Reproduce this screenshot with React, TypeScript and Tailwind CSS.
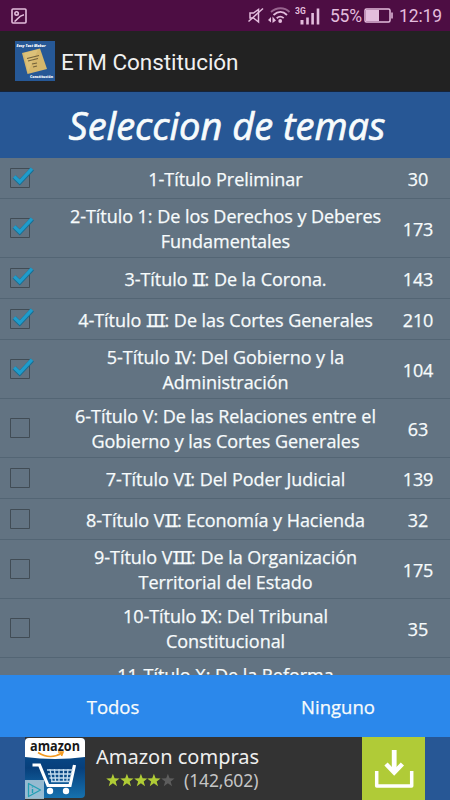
import { Fragment, useState } from "react";

type Topic = {
  lines: string[];
  count: number | null;
};

const TOPICS: Topic[] = [
  { lines: ["1-Título Preliminar"], count: 30 },
  { lines: ["2-Título 1: De los Derechos y Deberes", "Fundamentales"], count: 173 },
  { lines: ["3-Título II: De la Corona."], count: 143 },
  { lines: ["4-Título III: De las Cortes Generales"], count: 210 },
  { lines: ["5-Título IV: Del Gobierno y la", "Administración"], count: 104 },
  { lines: ["6-Título V: De las Relaciones entre el", "Gobierno y las Cortes Generales"], count: 63 },
  { lines: ["7-Título VI: Del Poder Judicial"], count: 139 },
  { lines: ["8-Título VII: Economía y Hacienda"], count: 32 },
  { lines: ["9-Título VIII: De la Organización", "Territorial del Estado"], count: 175 },
  { lines: ["10-Título IX: Del Tribunal", "Constitucional"], count: 35 },
  { lines: ["11-Título X: De la Reforma", "Constitucional"], count: null },
];

// The capital I is set with serifs so roman numerals stay readable
function TopicLine({ text }: { text: string }) {
  return (
    <span className="block whitespace-nowrap">
      {text.split(/(I+)/).map((part, i) =>
        part.startsWith("I") ? (
          <span
            key={i}
            className="font-['Inter'] text-[17.5px] leading-none tracking-[-1.5px] [font-feature-settings:'cv08']"
          >
            {part}
          </span>
        ) : (
          <Fragment key={i}>{part}</Fragment>
        )
      )}
    </span>
  );
}

function Checkbox({ checked }: { checked: boolean }) {
  return (
    <svg width="26" height="24" viewBox="0 0 26 24" fill="none" className="shrink-0">
      <path d="M.5 2.5h19v19H.5z" stroke="#414c55" />
      {checked && (
        <>
          <path d="M4.2 10.8l5.5 5.5L22.3 3" stroke="#186d92" strokeWidth="4.6" />
          <path d="M4.2 10.5l5.5 5.3L22 2.7" stroke="#1f9ccb" strokeWidth="3.3" />
        </>
      )}
    </svg>
  );
}

function StatusBar() {
  return (
    <header className="flex h-[31px] shrink-0 items-center bg-[#4d0d43] pl-[11px] pr-[8px] text-[#e3bddd]">
      <svg width="16" height="16" viewBox="0 0 16 16" fill="none" stroke="currentColor" strokeWidth="1.6">
        <rect x="1" y="1" width="14" height="14" rx="1" />
        <circle cx="5.6" cy="5.4" r="1.7" />
        <path d="M3.5 13.5c2.8-1 3.7-5.8 9.5-6.7" />
      </svg>

      {/* muted speaker */}
      <svg className="ml-auto" width="17" height="17" viewBox="0 0 17 17" fill="none" stroke="currentColor" strokeWidth="1.5">
        <path d="M3 6h3.5l5-3.5V15l-5-4H3z" />
        <path d="M1.5 14.5L16 1.5" />
      </svg>

      {/* wifi with traffic arrows */}
      <svg className="ml-[4px]" width="23" height="17" viewBox="0 0 23 17" fill="none" stroke="currentColor" strokeWidth="1.8">
        <path d="M3 5c5.5-5 13.5-5 18.5 0" stroke="#98658f" />
        <path d="M5.5 8c4.5-4 9.5-4 13.5 0M8.7 11.2c2.3-2 4.8-2 7 0" />
        <circle cx="12.2" cy="14" r="1.9" fill="currentColor" stroke="none" />
        <path d="M0 13l3-3v5.5zM4.5 9.5l3.5 4-3.5 2.5z" fill="currentColor" stroke="none" />
      </svg>

      <svg className="ml-[4px]" width="26" height="20" viewBox="0 0 26 20" fill="currentColor">
        <text x="0" y="8" fontSize="8.5" fontWeight="700" fontFamily="Roboto, sans-serif">3G</text>
        <path d="M5.5 14h3v4.500h-3zM11.2 11.5h2.6v7h-2.6zM16.3 7h2.6v11.500h-2.6zM21.7 2.500h2.6v16h-2.6z" />
      </svg>

      <span className="ml-[9px] w-[33px] whitespace-nowrap pt-[2px] font-['Roboto'] text-[17.5px] leading-none tracking-[-0.2px]">55%</span>

      <svg className="ml-px" width="29" height="15" viewBox="0 0 29 15" fill="none" stroke="currentColor" strokeWidth="1.5">
        <rect x="1" y="1" width="25" height="13" rx="1.5" />
        <path d="M2 2h13v11H2z" fill="currentColor" stroke="none" />
        <path d="M28 4.500v6" />
      </svg>

      <span className="ml-[6px] whitespace-nowrap pt-[2px] font-['Roboto'] text-[17.5px] leading-none tracking-[-0.1px]">12:19</span>
    </header>
  );
}

function AppIcon() {
  return (
    <svg width="40" height="40" viewBox="0 0 40 40">
      <rect width="40" height="40" fill="#265896" />
      <path d="M7 12L25 7.5 32 28 12.5 33z" fill="#d5b76c" />
      <path d="M9 12l14-3.500L13 31z" fill="#e3cb85" opacity=".5" />
      <path d="M12 17.5l12-3M13 20l10-2.500M17 23l5-1M18 26l4-1" stroke="#72613b" strokeWidth="1.1" />
      <g fill="#fff" fontFamily="Open Sans, sans-serif" fontSize="4" fontWeight="800">
        <text x="1.5" y="6" textLength="29" lengthAdjust="spacingAndGlyphs" fontStyle="italic">Easy Test Maker</text>
        <text x="15" y="37" textLength="23" lengthAdjust="spacingAndGlyphs">Constitución</text>
      </g>
    </svg>
  );
}

function AmazonIcon() {
  return (
    <svg width="60" height="62" viewBox="0 0 60 62">
      <defs>
        <linearGradient id="cartBg" x1="0" y1="0" x2="0" y2="1">
          <stop offset="0" stopColor="#075496" />
          <stop offset=".5" stopColor="#073f7b" />
          <stop offset="1" stopColor="#1672af" />
        </linearGradient>
      </defs>
      <rect y="1" width="60" height="60" rx="4" fill="url(#cartBg)" />
      <path d="M0 20V5a4 4 0 014-4h52a4 4 0 014 4v15Q30 24 0 20z" fill="#fff" />
      <text x="5" y="14" fontSize="15" fontWeight="700" fontFamily="Open Sans, sans-serif" fill="#181818" textLength="50" lengthAdjust="spacingAndGlyphs">amazon</text>
      <path d="M13 15.500c8 5 17 5 24 .5M33 15h5l-1.500 4" fill="none" stroke="#f39a21" strokeWidth="1.7" />
      <path d="M7.500 28h7l8.500 20.500h22l4.500-20.500" fill="none" stroke="#fff" strokeWidth="3.2" />
      <path d="M22 33h26M23 37h24M24.500 41h21M26 44.500h18M25 32l2 12M29.500 32l1 12M34 32v12M38.500 32v12M43 32l-1 12" stroke="#c4dced" strokeWidth="1.3" />
      <circle cx="25" cy="54" r="3.2" fill="#fff" />
      <circle cx="41" cy="54" r="3.2" fill="#fff" />
      <path d="M0 43h19v19H0z" fill="#adcbdb" opacity=".85" />
      <path d="M3.500 46.500v13l12-6.500z" fill="none" stroke="#229fb4" strokeWidth="1.3" strokeLinejoin="round" />
      <path d="M7.500 52v4M7.500 49.500v1" stroke="#229fb4" strokeWidth="1.4" />
    </svg>
  );
}

function Star({ on }: { on: boolean }) {
  return (
    <svg width="13.8" height="14" viewBox="0.5 0.3 13 13">
      <path
        d="M7 .8l1.600 4.400 4.700.100-3.700 2.800 1.300 4.500L7 9.900l-3.900 2.700 1.300-4.500L.7 5.300l4.700-.1z"
        fill={on ? "#b0cc36" : "#5d5d5d"}
      />
    </svg>
  );
}

function AdBanner() {
  return (
    <footer className="flex h-[63px] shrink-0 bg-[#275795] pl-[25px] pr-[25px]">
      <div className="flex w-[337px] bg-[#333333]">
        <AmazonIcon />
        <div className="pl-[11px] pt-[6px] font-['Noto_Sans'] text-[#efefef]">
          <p className="whitespace-nowrap text-[20px] leading-[27px]">Amazon compras</p>
          <div className="flex items-center pl-[10px]">
            {[1, 2, 3, 4, 5].map((n) => (
              <Star key={n} on={n <= 4} />
            ))}
            <span className="ml-[9px] whitespace-nowrap text-[17.5px] leading-[20px] tracking-[-0.1px] text-[#c5c5c5]">(142,602)</span>
          </div>
        </div>
      </div>
      <div className="flex w-[63px] items-center justify-center bg-[#b0cb37]">
        <svg width="40" height="40" viewBox="0 0 40 40" fill="none" stroke="#fff">
          <path d="M2.700 22v15h35V22" strokeWidth="3.5" strokeLinejoin="round" />
          <path d="M20.200 1v22" strokeWidth="4.8" />
          <path d="M12 15l8.200 8.500L28.400 15" strokeWidth="4.5" />
        </svg>
      </div>
    </footer>
  );
}

export default function App() {
  const [selected, setSelected] = useState<number[]>([0, 1, 2, 3, 4]);

  const toggle = (idx: number) =>
    setSelected((prev) => (prev.includes(idx) ? prev.filter((n) => n !== idx) : [...prev, idx]));

  return (
    <div className="flex h-[800px] w-[450px] flex-col overflow-hidden bg-[#627382] font-['Open_Sans',sans-serif] text-[#f7fbfc]">
      <StatusBar />

      <div className="flex h-[61px] shrink-0 items-center border-b border-[#16243a] bg-[#222222] pl-[15px]">
        <AppIcon />
        <h1 className="ml-[6px] whitespace-nowrap pt-[4px] font-['Roboto'] text-[22.5px] tracking-[-0.05px] text-[#f0f0f0]">
          ETM Constitución
        </h1>
      </div>

      <h2 className="flex h-[66px] shrink-0 items-center justify-center whitespace-nowrap bg-[#275795] pl-[4px] text-[38px] italic [-webkit-text-stroke:0.7px_currentColor]">
        Seleccion de temas
      </h2>

      <ul className="min-h-0 flex-1 overflow-hidden [-webkit-text-stroke:0.25px_currentColor]">
        {TOPICS.map((topic, i) => (
          <li
            key={i}
            onClick={() => toggle(i)}
            className={`flex items-center border-b border-[#536574] pl-[10px] text-[18px] leading-[25px] ${
              topic.lines.length > 1 ? "h-[59px]" : "h-[41px]"
            }`}
          >
            {topic.count !== null ? <Checkbox checked={selected.includes(i)} /> : <span className="w-[26px] shrink-0" />}
            <div className="w-[348px] shrink-0 pl-[31px] pt-[2px] text-center tracking-[-0.04px]">
              {topic.lines.map((line) => (
                <TopicLine key={line} text={line} />
              ))}
            </div>
            <span className="w-[66px] shrink-0 pl-[2px] pt-[2px] text-center tracking-[-0.1px]">{topic.count}</span>
          </li>
        ))}
      </ul>

      <div className="flex h-[62px] shrink-0 bg-[#2b88eb] text-[18.5px] [-webkit-text-stroke:0.25px_currentColor]">
        <button className="flex-1 pl-px pt-[2px]" onClick={() => setSelected(TOPICS.map((_, i) => i))}>
          Todos
        </button>
        <button className="flex-1 pl-px pt-[2px]" onClick={() => setSelected([])}>
          Ninguno
        </button>
      </div>

      <AdBanner />
    </div>
  );
}
